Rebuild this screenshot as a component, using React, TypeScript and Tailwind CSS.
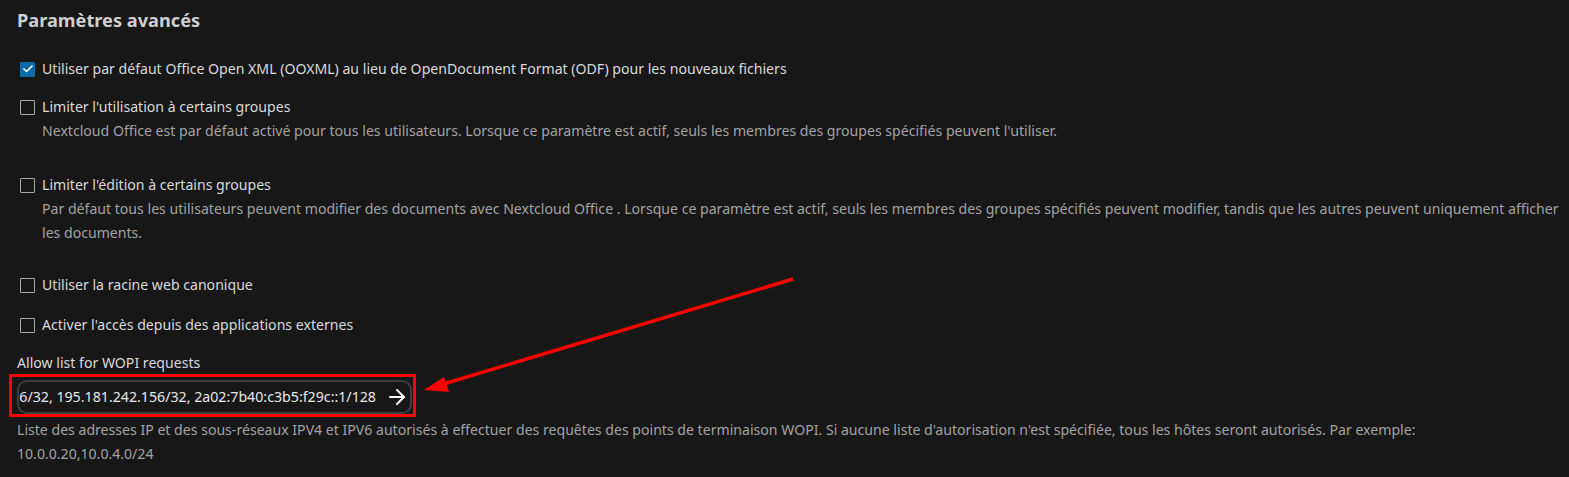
import { ArrowRight, Check } from "lucide-react";
import clsx from "clsx";

interface OptionProps {
  label: string;
  checked?: boolean;
  description?: string;
  className?: string;
}

const Option = (props: OptionProps) => {
  const { label, checked, description, className } = props;

  return (
    <div className={className}>
      <label className="flex items-center gap-[7px] text-[14.1px] leading-[24px] text-[#dadada]">
        <span
          className={clsx(
            "ml-[3px] flex h-[15px] w-[15px] shrink-0 items-center justify-center rounded-[1px]",
            checked ? "bg-[#0b6aa8]" : "border border-[#a8a8a8]",
          )}
        >
          {checked && <Check className="h-[12px] w-[12px] text-white" strokeWidth={3.5} />}
        </span>
        {label}
      </label>
      {description && (
        <p className="pl-[25px] text-[14.1px] leading-[24px] text-[#a3a3a3]">{description}</p>
      )}
    </div>
  );
};

const App = () => {
  return (
    <div
      className="relative min-h-[477px] w-full overflow-hidden bg-[#171717] pb-[10px] pl-[17px] pr-[2px]"
      style={{ fontFamily: '"Noto Sans", "Open Sans", sans-serif' }}
    >
      <h2 className="pt-[6px] text-[18.2px] font-bold leading-[28px] text-[#cfcfcf]">
        Paramètres avancés
      </h2>

      <Option
        className="mt-[23px]"
        checked
        label="Utiliser par défaut Office Open XML (OOXML) au lieu de OpenDocument Format (ODF) pour les nouveaux fichiers"
      />
      <Option
        className="mt-[14px]"
        label="Limiter l'utilisation à certains groupes"
        description="Nextcloud Office est par défaut activé pour tous les utilisateurs. Lorsque ce paramètre est actif, seuls les membres des groupes spécifiés peuvent l'utiliser."
      />
      <Option
        className="mt-[30px]"
        label="Limiter l'édition à certains groupes"
        description="Par défaut tous les utilisateurs peuvent modifier des documents avec Nextcloud Office . Lorsque ce paramètre est actif, seuls les membres des groupes spécifiés peuvent modifier, tandis que les autres peuvent uniquement afficher les documents."
      />
      <Option className="mt-[28px]" label="Utiliser la racine web canonique" />
      <Option className="mt-[16px]" label="Activer l'accès depuis des applications externes" />

      <div className="mt-[14px] text-[14.1px] leading-[24px] text-[#dadada]">
        Allow list for WOPI requests
      </div>

      <div className="relative mt-[5px] w-[395px]">
        <div className="flex h-[34px] items-center gap-[9px] rounded-[10px] border-2 border-[#3d3d3d] bg-[#171717] pl-[0px] pr-[1px]">
          <div className="flex min-w-0 flex-1 justify-end overflow-hidden">
            <span className="whitespace-nowrap text-[14.2px] text-[#e8e8e8]">
              10.0.5.186/32, 195.181.242.156/32, 2a02:7b40:c3b5:f29c::1/128
            </span>
          </div>
          <ArrowRight className="h-[24px] w-[24px] shrink-0 text-white" strokeWidth={2} />
        </div>
        <div className="pointer-events-none absolute left-[-8px] top-[-6px] h-[43px] w-[407px] border-[3px] border-[#ff0000]" />
      </div>

      <p className="mt-[4px] pr-[40px] text-[14.1px] leading-[24px] text-[#a3a3a3]">
        Liste des adresses IP et des sous-réseaux IPV4 et IPV6 autorisés à effectuer des requêtes des points de terminaison WOPI. Si aucune liste d'autorisation n'est spécifiée, tous les hôtes seront autorisés. Par exemple: 10.0.0.20,10.0.4.0/24
      </p>

      <svg
        className="pointer-events-none absolute left-0 top-0"
        width="1569"
        height="477"
        viewBox="0 0 1569 477"
        aria-hidden="true"
      >
        <line x1="793" y1="279" x2="440" y2="385" stroke="#ff0000" strokeWidth="3.5" />
        <polygon points="424,390 444,377 449,392" fill="#ff0000" />
      </svg>
    </div>
  );
};

export default App;
